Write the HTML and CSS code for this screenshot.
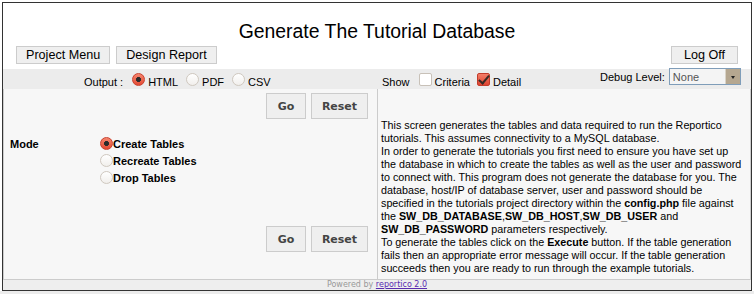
FILE: index.html
```html
<!DOCTYPE html>
<html lang="en">
<head>
    <meta charset="UTF-8">
    <meta name="viewport" content="width=device-width, initial-scale=1.0">
    <title>Generate The Tutorial Database</title>
    <link rel="stylesheet" href="styles.css">
</head>
<body>
<div class="frame">
    <h1 class="title">Generate The Tutorial Database</h1>

    <div class="menu-bar">
        <div class="menu-left">
            <button class="menu-button">Project Menu</button>
            <button class="menu-button">Design Report</button>
        </div>
        <button class="menu-button logoff">Log Off</button>
    </div>

    <div class="criteria-bar">
        <div class="output-opts">
            <span class="opt-text opt-label">Output :</span>
            <input type="radio" name="output" class="radio" checked>
            <span class="opt-text">HTML</span>
            <input type="radio" name="output" class="radio gap">
            <span class="opt-text">PDF</span>
            <input type="radio" name="output" class="radio gap">
            <span class="opt-text">CSV</span>
        </div>
        <div class="show-opts">
            <span class="opt-text opt-label">Show</span>
            <input type="checkbox" class="check">
            <span class="opt-text">Criteria</span>
            <input type="checkbox" class="check gap" checked>
            <span class="opt-text">Detail</span>
        </div>
        <div class="debug">
            <span class="debug-label">Debug Level:</span>
            <div class="debug-select">
                <select>
                    <option>None</option>
                    <option>Low</option>
                    <option>Medium</option>
                    <option>High</option>
                </select>
            </div>
        </div>
    </div>

    <div class="main">
        <div class="left-panel">
            <div class="actions">
                <button class="action-button btn-go">Go</button>
                <button class="action-button btn-reset">Reset</button>
            </div>
            <div class="mode-row">
                <div class="mode-label">Mode</div>
                <div class="mode-options">
                    <label class="mode-option"><input type="radio" name="mode" class="radio" checked>Create Tables</label>
                    <label class="mode-option"><input type="radio" name="mode" class="radio">Recreate Tables</label>
                    <label class="mode-option"><input type="radio" name="mode" class="radio">Drop Tables</label>
                </div>
            </div>
            <div class="actions actions-bottom">
                <button class="action-button btn-go">Go</button>
                <button class="action-button btn-reset">Reset</button>
            </div>
        </div>
        <div class="right-panel">
            <!-- line breaks kept as the original page wraps them -->
            <p class="help">
                This screen generates the tables and data required to run the Reportico<br>
                tutorials. This assumes connectivity to a MySQL database.<br>
                In order to generate the tutorials you first need to ensure you have set up<br>
                the database in which to create the tables as well as the user and password<br>
                to connect with. This program does not generate the database for you. The<br>
                database, host/IP of database server, user and password should be<br>
                specified in the tutorials project directory within the <b>config.php</b> file against<br>
                the <b>SW_DB_DATABASE</b>,<b>SW_DB_HOST</b>,<b>SW_DB_USER</b> and<br>
                <b>SW_DB_PASSWORD</b> parameters respectively.<br>
                To generate the tables click on the <b>Execute</b> button. If the table generation<br>
                fails then an appropriate error message will occur. If the table generation<br>
                succeeds then you are ready to run through the example tutorials.
            </p>
        </div>
    </div>

    <div class="footer">Powered by <a href="#">reportico 2.0</a></div>
</div>
</body>
</html>
```

FILE: styles.css
```css
html {
    background-color: #ececec;
}

body {
    font-family: 'Liberation Sans', Arial, sans-serif;
    background-color: #fff;
    margin: 0;
    padding: 2px 2px 0 2px;
}

.frame {
    border: 1px solid #333;
    background-color: #fff;
}

.title {
    margin: 0;
    padding-top: 16px;
    font-size: 19.4px;
    font-weight: normal;
    line-height: 24px;
    text-align: center;
    color: #000;
}

/* top buttons */
.menu-bar {
    display: flex;
    justify-content: space-between;
    padding: 3px 13px 0 13px;
}

.menu-left {
    display: flex;
    gap: 6px;
}

.menu-button {
    font-family: 'Liberation Sans', Arial, sans-serif;
    font-size: 12.6px;
    height: 18px;
    line-height: 16px;
    padding: 0 9px;
    background-color: #efefef;
    border: 1px solid #ccc;
    color: #000;
}

.logoff {
    padding: 0 12px;
}

/* criteria bar */
.criteria-bar {
    display: flex;
    height: 20px;
    margin-top: 5px;
    background-color: #ececec;
    font-size: 11px;
}

.output-opts, .show-opts {
    display: flex;
    align-items: center;
}

.output-opts {
    width: 374px;
    padding-left: 81px;
    box-sizing: border-box;
}

.show-opts {
    padding-left: 5px;
    width: 218px;
    box-sizing: border-box;
}

.opt-text {
    padding-top: 6px;
    color: #000;
}

.opt-label {
    margin-right: 9px;
}

.radio, .check {
    -webkit-appearance: none;
    appearance: none;
    width: 13px;
    height: 13px;
    margin: 0 3px 0 0;
    flex-shrink: 0;
    position: relative;
}

.radio {
    border-radius: 50%;
    border: 1px solid #cfc8bf;
    background: linear-gradient(#fff, #f1efec);
}

.radio:checked {
    border-color: #c8412f;
    background: radial-gradient(circle at 50% 50%, #2b2b2b 0, #2b2b2b 2.2px, transparent 2.8px),
                linear-gradient(#f6866f, #e34a33);
}

.check {
    border: 1px solid #c8c1b8;
    border-radius: 2px;
    background: #fff;
}

.check:checked {
    border-color: #c23b2a;
    background: linear-gradient(#f37d68, #de4430);
}

.check:checked::after {
    content: '';
    position: absolute;
    left: 3px;
    top: -1px;
    width: 4px;
    height: 9px;
    border: solid #3a2a25;
    border-width: 0 2px 2px 0;
    transform: rotate(40deg);
}

.output-opts .gap {
    margin-left: 8px;
}

.show-opts .gap {
    margin-left: 7px;
}

.debug {
    display: flex;
    align-items: center;
    margin-top: -1px;
    height: 17px;
    margin-left: 5px;
}

.debug-label {
    margin-right: 4px;
    color: #000;
}

.debug-select {
    position: relative;
    width: 72px;
    height: 17px;
}

.debug-select select {
    -webkit-appearance: none;
    appearance: none;
    width: 72px;
    height: 17px;
    margin: 0;
    padding: 0 0 0 3px;
    border: 1px solid #7f9db9;
    background-color: #f4f4f4;
    font-family: 'Liberation Sans', Arial, sans-serif;
    font-size: 11px;
    color: #555;
}

.debug-select::after {
    content: '';
    position: absolute;
    right: 1px;
    top: 1px;
    width: 15px;
    height: 15px;
    background-color: #b5a790;
    border-left: 1px solid #d9d3c7;
    box-sizing: border-box;
}

.debug-select::before {
    content: '';
    position: absolute;
    right: 6px;
    top: 8px;
    border-left: 2px solid transparent;
    border-right: 2px solid transparent;
    border-top: 3px solid #222;
    z-index: 1;
}

/* main area */
.main {
    display: flex;
    background-color: #f7f7f7;
    border: 1px solid #ccc;
    border-top: none;
}

.left-panel {
    width: 373px;
    padding: 4px 9px 0 6px;
    box-sizing: border-box;
}

.actions {
    display: flex;
    justify-content: flex-end;
    gap: 5px;
}

.actions-bottom {
    margin-top: 39px;
}

.action-button {
    height: 26px;
    padding: 0;
    background-color: #efefef;
    border: 1px solid #ccc;
    color: #444;
    font-family: 'DejaVu Sans', Tahoma, sans-serif;
    font-weight: bold;
    font-size: 11px;
}

.btn-go {
    width: 40px;
}

.btn-reset {
    width: 57px;
}

.mode-row {
    display: flex;
    margin-top: 17px;
    font-size: 11px;
    font-weight: bold;
    line-height: 17px;
}

.mode-label {
    width: 90px;
}

.mode-option {
    display: flex;
    align-items: center;
    height: 17px;
}

.mode-option .radio {
    margin: 0;
    top: -1px;
}

.right-panel {
    flex: 1;
    min-width: 0;
    border-left: 1px solid #ccc;
    padding: 30px 0 4px 3px;
    overflow: hidden;
}

.help {
    margin: 0;
    font-size: 10.75px;
    line-height: 13px;
    white-space: nowrap;
    color: #000;
}

/* footer */
.footer {
    height: 10px;
    background-color: #eee;
    text-align: center;
    font-family: 'DejaVu Sans', Tahoma, sans-serif;
    font-size: 8px;
    line-height: 10px;
    color: #999;
}

.footer a {
    color: #5a2bb0;
}
```
